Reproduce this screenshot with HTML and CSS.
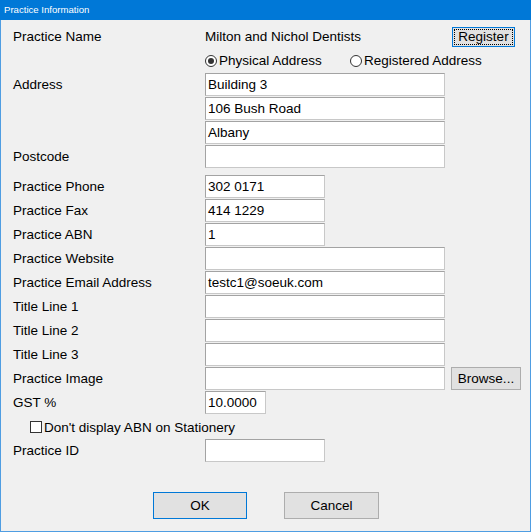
FILE: index.html
```html
<!DOCTYPE html>
<html>
<head>
<meta charset="utf-8">
<link rel="stylesheet" href="styles.css">
</head>
<body>
<div class="window">
  <div class="titlebar">Practice Information</div>
  <div class="content">
    <div class="row row-name">
      <span class="label">Practice Name</span>
      <span class="value">Milton and Nichol Dentists</span>
      <button class="btn btn-register">Register</button>
    </div>
    <div class="row row-radio">
      <span class="label"></span>
      <span class="radio radio-first"><span class="radio-dot checked"></span>Physical Address</span>
      <span class="radio"><span class="radio-dot"></span>Registered Address</span>
    </div>
    <div class="row"><span class="label">Address</span><div class="tb wide">Building 3</div></div>
    <div class="row"><span class="label"></span><div class="tb wide">106 Bush Road</div></div>
    <div class="row"><span class="label"></span><div class="tb wide">Albany</div></div>
    <div class="row"><span class="label">Postcode</span><div class="tb wide"></div></div>
    <div class="row gap-top"><span class="label">Practice Phone</span><div class="tb short">302 0171</div></div>
    <div class="row"><span class="label">Practice Fax</span><div class="tb short">414 1229</div></div>
    <div class="row"><span class="label">Practice ABN</span><div class="tb short">1</div></div>
    <div class="row"><span class="label">Practice Website</span><div class="tb wide"></div></div>
    <div class="row"><span class="label">Practice Email Address</span><div class="tb wide">testc1@soeuk.com</div></div>
    <div class="row"><span class="label">Title Line 1</span><div class="tb wide"></div></div>
    <div class="row"><span class="label">Title Line 2</span><div class="tb wide"></div></div>
    <div class="row"><span class="label">Title Line 3</span><div class="tb wide"></div></div>
    <div class="row"><span class="label">Practice Image</span><div class="tb wide"></div><button class="btn btn-browse">Browse...</button></div>
    <div class="row"><span class="label">GST %</span><div class="tb tiny">10.0000</div></div>
    <div class="row row-check"><span class="checkbox"></span>Don't display ABN on Stationery</div>
    <div class="row"><span class="label">Practice ID</span><div class="tb short"></div></div>
    <div class="actions">
      <button class="btn btn-ok">OK</button>
      <button class="btn btn-cancel">Cancel</button>
    </div>
  </div>
</div>
</body>
</html>
```
FILE: styles.css
```css
* { box-sizing: border-box; }
html, body { margin: 0; padding: 0; }
body {
  font-family: "Liberation Sans", Arial, sans-serif;
  font-size: 13.5px;
  color: #000;
  background: #f0f0f0;
}
.window {
  width: 531px;
  height: 532px;
  background: #f0f0f0;
  border: 1px solid #4f9de2;
  border-top: 0;
  display: flex;
  flex-direction: column;
}
.titlebar {
  height: 20px;
  margin: 0 -1px;
  background: #0078d7;
  color: #fff;
  font-size: 9.6px;
  line-height: 20px;
  padding-left: 4px;
}
.content {
  padding: 7px 0 0 12px;
  display: flex;
  flex-direction: column;
}
.row {
  display: flex;
  align-items: flex-start;
  height: 24px;
  line-height: 23px;
  white-space: nowrap;
}
.label {
  width: 192px;
  flex: none;
}
.row-name {
  height: 20px;
  line-height: 20px;
  margin-bottom: 4px;
}
.value {
  width: 247px;
  flex: none;
}
.row-radio {
  height: 20px;
  line-height: 20px;
  margin-bottom: 2px;
}
.radio {
  display: flex;
  align-items: center;
}
.radio-first {
  width: 145px;
}
.radio-dot {
  width: 12px;
  height: 12px;
  border: 1px solid #333;
  border-radius: 50%;
  background: #fff;
  margin-right: 2px;
  position: relative;
}
.radio-dot.checked::after {
  content: "";
  position: absolute;
  left: 2px;
  top: 2px;
  width: 6px;
  height: 6px;
  border-radius: 50%;
  background: #333;
}
.tb {
  height: 23px;
  background: #fff;
  border: 1px solid #a3a3a3;
  border-right-color: #c8c8c8;
  border-bottom-color: #c8c8c8;
  padding: 0 2px;
  line-height: 21px;
  flex: none;
}
.wide { width: 240px; }
.short { width: 120px; }
.tiny { width: 61px; }
.gap-top { margin-top: 6px; }
.btn {
  font-family: "Liberation Sans", Arial, sans-serif;
  font-size: 13.5px;
  color: #000;
  background: #e1e1e1;
  border: 1px solid #adadad;
  padding: 0;
  margin: 0;
  flex: none;
}
.btn-register {
  width: 63px;
  height: 20px;
  line-height: 18px;
  border-color: #0078d7;
  outline: 1px dotted #000;
  outline-offset: -3px;
}
.btn-browse {
  width: 70px;
  height: 23px;
  margin-left: 6px;
}
.row-check {
  align-items: center;
  padding-left: 17px;
}
.checkbox {
  width: 12px;
  height: 12px;
  border: 1px solid #333;
  background: #fff;
  margin-right: 2px;
}
.actions {
  display: flex;
  gap: 37px;
  padding-left: 140px;
  margin-top: 29px;
}
.btn-ok {
  width: 94px;
  height: 27px;
  border-color: #0078d7;
}
.btn-cancel {
  width: 95px;
  height: 27px;
}
```
